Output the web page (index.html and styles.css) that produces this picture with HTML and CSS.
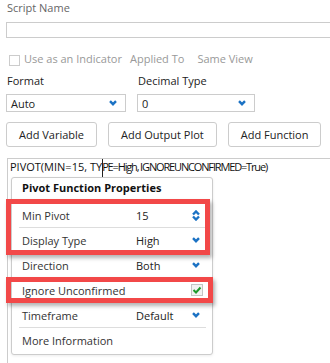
FILE: index.html
```html
<!DOCTYPE html>
<html lang="en">

<head>
    <meta charset="UTF-8">
    <meta name="viewport" content="width=device-width, initial-scale=1.0">
    <title>Script Editor</title>
    <link rel="stylesheet" href="styles.css">
</head>

<body>
    <div class="page">
        <label class="field-label" for="scriptName">Script Name</label>
        <input class="text-input" type="text" id="scriptName">

        <div class="options-row">
            <span class="check-box"></span>
            <span class="check-text">Use as an Indicator</span>
            <span class="applied-label">Applied To</span>
            <span class="applied-value">Same View</span>
        </div>

        <div class="select-row">
            <div class="select-col col-format">
                <div class="select-title">Format</div>
                <div class="select-box">
                    <span>Auto</span>
                    <svg class="chevron" width="8" height="6" viewBox="0 0 8 6"><polyline points="1,1.2 4,4.2 7,1.2" /></svg>
                </div>
            </div>
            <div class="select-col col-decimal">
                <div class="select-title">Decimal Type</div>
                <div class="select-box">
                    <span>0</span>
                    <svg class="chevron" width="8" height="6" viewBox="0 0 8 6"><polyline points="1,1.2 4,4.2 7,1.2" /></svg>
                </div>
            </div>
        </div>

        <div class="button-row">
            <button type="button" class="btn">Add Variable</button>
            <button type="button" class="btn">Add Output Plot</button>
            <button type="button" class="btn">Add Function</button>
        </div>

        <div class="editor">
            <div class="code-line"><span class="code-head">PIVOT(MIN=15, TY</span><span class="caret"></span><span class="code-tail">PE=High, IGNOREUNCONFIRMED=True)</span></div>

            <div class="props-panel">
                <div class="props-title">Pivot Function Properties</div>
                <div class="prop-row">
                    <span class="prop-name">Min Pivot</span>
                    <span class="prop-value">15</span>
                    <svg class="chevron" width="8" height="11" viewBox="0 0 8 11"><polyline points="1,4.5 4,1.5 7,4.5" /><polyline points="1,6.5 4,9.5 7,6.5" /></svg>
                </div>
                <div class="prop-row">
                    <span class="prop-name">Display Type</span>
                    <span class="prop-value">High</span>
                    <svg class="chevron" width="8" height="6" viewBox="0 0 8 6"><polyline points="1,1.2 4,4.2 7,1.2" /></svg>
                </div>
                <div class="prop-row">
                    <span class="prop-name">Direction</span>
                    <span class="prop-value">Both</span>
                    <svg class="chevron" width="8" height="6" viewBox="0 0 8 6"><polyline points="1,1.2 4,4.2 7,1.2" /></svg>
                </div>
                <div class="prop-row">
                    <span class="prop-name">Ignore Unconfirmed</span>
                    <span class="prop-value"></span>
                    <span class="prop-check">
                        <svg width="10" height="10" viewBox="0 0 10 10"><polyline points="1.5,5 4,7.5 8.5,2.5" /></svg>
                    </span>
                </div>
                <div class="prop-row">
                    <span class="prop-name">Timeframe</span>
                    <span class="prop-value">Default</span>
                    <svg class="chevron" width="8" height="6" viewBox="0 0 8 6"><polyline points="1,1.2 4,4.2 7,1.2" /></svg>
                </div>
                <div class="prop-row">
                    <span class="prop-name">More Information</span>
                </div>

                <!-- annotation boxes -->
                <div class="highlight hl-first"></div>
                <div class="highlight hl-ignore"></div>
            </div>
        </div>
    </div>
</body>

</html>
```

FILE: styles.css
```css
body {
    margin: 0;
    font-family: "Open Sans", sans-serif;
    font-size: 11px;
    line-height: 15px;
    color: #222;
    background: #fff;
    overflow: hidden;
}

.page {
    padding-left: 6px;
}

.field-label {
    display: block;
    padding-left: 1px;
    color: #666;
}

.text-input {
    display: block;
    margin: 7px 0 0;
    width: 340px;
    height: 16px;
    padding: 0;
    border: 1px solid #ccc;
    box-sizing: border-box;
}

.options-row {
    display: flex;
    align-items: flex-start;
    margin-top: 13px;
    height: 15px;
    color: #999;
}

.check-box {
    width: 11px;
    height: 11px;
    margin: 4px 4px 0 3px;
    border: 1px solid #ccc;
    box-sizing: border-box;
}

.applied-label {
    margin-left: 8px;
}

.applied-value {
    margin-left: 13px;
}

.select-row {
    display: flex;
    gap: 11px;
    margin-top: 7px;
}

.col-format {
    width: 120px;
}

.col-decimal {
    width: 118px;
}

.select-title {
    padding-left: 1px;
}

.select-box {
    display: flex;
    align-items: center;
    justify-content: space-between;
    height: 18px;
    margin-top: 6px;
    padding: 0 8px 0 4px;
    border: 1px solid #ccc;
    box-sizing: border-box;
}

.chevron polyline {
    fill: none;
    stroke: #1b72c4;
    stroke-width: 2.4;
}

.button-row {
    display: flex;
    gap: 11px;
    margin-top: 10px;
}

.btn {
    height: 25px;
    padding: 0 12px;
    font-family: inherit;
    font-size: 11px;
    color: #222;
    background: #fff;
    border: 1px solid #ccc;
    border-radius: 3px;
}

.editor {
    margin: 11px 0 0 1px;
    height: 220px;
    padding-left: 2px;
    border-top: 1px solid #ccc;
    border-left: 1px solid #ccc;
}

.code-line {
    height: 15px;
    color: #111;
    white-space: nowrap;
}

.code-tail {
    letter-spacing: -1.15px;
}

.caret {
    display: inline-block;
    width: 0;
    height: 18px;
    border-left: 1px solid #222;
    margin-right: -1px;
    vertical-align: top;
}

.props-panel {
    position: relative;
    width: 202px;
    margin: 3px 0 0 1px;
    padding-bottom: 2px;
    background: #fff;
    border: 1px solid #ccc;
    border-radius: 3px;
    box-sizing: border-box;
    box-shadow: 0 1px 3px rgba(0, 0, 0, 0.08);
}

.props-title {
    height: 24px;
    padding: 2px 10px 0;
    font-weight: 700;
    color: #111;
    box-sizing: border-box;
}

.prop-row {
    display: flex;
    align-items: center;
    height: 25px;
    margin: 0 6px 0 7px;
    padding: 0 6px 0 3px;
    border-top: 1px solid #ddd;
    box-sizing: border-box;
    color: #333;
}

.prop-name {
    width: 114px;
    flex-shrink: 0;
}

.prop-value {
    flex: 1;
    color: #222;
}

.prop-check {
    display: flex;
    align-items: center;
    justify-content: center;
    width: 12px;
    height: 12px;
    margin-right: -3px;
    background: #f2f2f2;
    border: 1px solid #c4c4c4;
    box-sizing: border-box;
}

.prop-check polyline {
    fill: none;
    stroke: #1e9a2c;
    stroke-width: 2;
}

.highlight {
    position: absolute;
    left: -6px;
    border: 5px solid #f24848;
    box-sizing: border-box;
    box-shadow: 2px 3px 4px rgba(0, 0, 0, 0.3);
}

.hl-first {
    top: 21px;
    width: 204px;
    height: 56px;
}

.hl-ignore {
    top: 99px;
    width: 207px;
    height: 26px;
}
```
